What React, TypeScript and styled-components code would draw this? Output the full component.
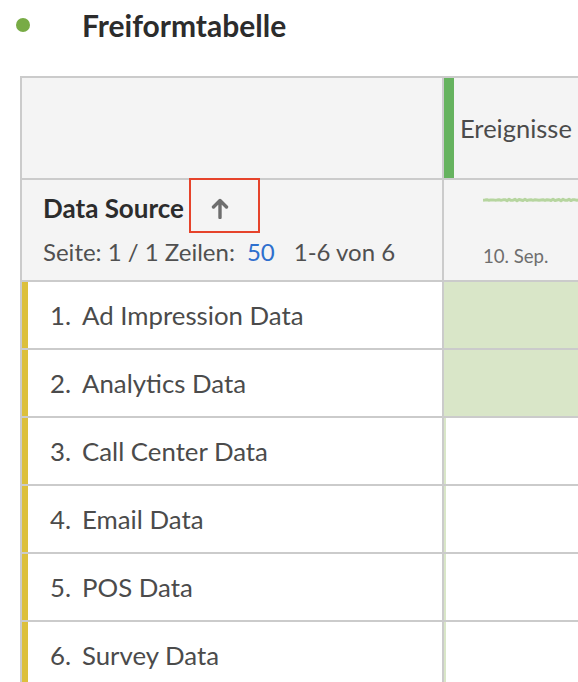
import React from "react";
import styled, { createGlobalStyle } from "styled-components";

const GlobalStyle = createGlobalStyle`
  html, body { margin: 0; padding: 0; background: #ffffff; overflow: hidden; }
  body { font-family: Lato, "Open Sans", sans-serif; }
`;

const Page = styled.div`
  width: 578px;
  height: 682px;
  overflow: hidden;
  background: #ffffff;
`;

const TitleBar = styled.header`
  display: flex;
  align-items: center;
  height: 50px;
`;

const Dot = styled.span`
  width: 14px;
  height: 14px;
  border-radius: 50%;
  background: #78ab45;
  margin-left: 16px;
  flex: none;
`;

const Title = styled.h1`
  margin: 0 0 0 52px;
  font-size: 30px;
  line-height: 34px;
  font-weight: 700;
  color: #2c2c2c;
`;

const TableWrap = styled.div`
  margin: 26px 0 0 20px;
  width: 700px;
  border-top: 2px solid #cbcbcb;
  border-left: 2px solid #cbcbcb;
`;

const Row = styled.div<{ $height: number; $head?: boolean }>`
  display: grid;
  grid-template-columns: 422px 1fr;
  height: ${(p) => p.$height}px;
  background: ${(p) => (p.$head ? "#f4f4f4" : "#ffffff")};
`;

const Cell = styled.div<{ $left?: boolean }>`
  box-sizing: border-box;
  border-bottom: 2px solid #cbcbcb;
  border-right: ${(p) => (p.$left ? "2px solid #cbcbcb" : "none")};
  position: relative;
  display: flex;
`;

const MetricHead = styled(Cell)`
  align-items: stretch;
`;

const GreenBar = styled.span`
  width: 10px;
  background: #66b35f;
  flex: none;
`;

const MetricLabel = styled.span`
  padding: 35px 0 0 6px;
  font-size: 25.5px;
  line-height: 30px;
  color: #4b4b4b;
  white-space: nowrap;
`;

const DimHead = styled(Cell)`
  flex-direction: column;
  padding: 13px 0 0 21px;
`;

const DimTitle = styled.div`
  display: flex;
  align-items: center;
  font-size: 26px;
  line-height: 30px;
  font-weight: 700;
  color: #2c2c2c;
`;

const SortIcon = styled.svg`
  width: 18px;
  height: 22px;
  margin-left: 27px;
`;

const Highlight = styled.span`
  position: absolute;
  left: 167px;
  top: -2px;
  width: 71px;
  height: 55px;
  box-sizing: border-box;
  border: 2px solid #e6432b;
  pointer-events: none;
`;

const Pager = styled.div`
  margin-top: 15px;
  font-size: 24px;
  line-height: 28px;
  color: #505050;
  white-space: nowrap;
  display: flex;
`;

const PagerLink = styled.span`
  color: #2d6fce;
  margin: 0 19px 0 12px;
`;

const TrendHead = styled(Cell)`
  flex-direction: column;
  padding: 16px 0 0 39px;
`;

const Spark = styled.svg`
  width: 220px;
  height: 8px;
  display: block;
`;

const DateLabel = styled.span`
  margin-top: 41px;
  font-size: 18.6px;
  line-height: 22px;
  color: #6e6e6e;
`;

const DimCell = styled(Cell)`
  align-items: center;
`;

const ColorTag = styled.span`
  width: 6px;
  align-self: stretch;
  background: #dcc03c;
  flex: none;
`;

const RowNum = styled.span`
  width: 43px;
  text-align: right;
  font-size: 25.8px;
  color: #4b4b4b;
  flex: none;
`;

const RowName = styled.span`
  margin-left: 11px;
  font-size: 25.8px;
  color: #4b4b4b;
  white-space: nowrap;
`;

const ValueCell = styled(Cell)`
  align-items: stretch;
`;

const ValueBar = styled.span`
  background: #d9e6c8;
`;

const rows = [
  { name: "Ad Impression Data", share: 100 },
  { name: "Analytics Data", share: 100 },
  { name: "Call Center Data", share: 0.8 },
  { name: "Email Data", share: 0.8 },
  { name: "POS Data", share: 0.8 },
  { name: "Survey Data", share: 0.8 },
];

const sparkPoints = Array.from({ length: 111 }, (_, i) => {
  const y = 4 + Math.sin(i * 2.3) * 0.5 + Math.cos(i * 3.7) * 0.35;
  return `${i * 2},${y.toFixed(2)}`;
}).join(" ");

export default function App() {
  return (
    <Page>
      <GlobalStyle />
      <TitleBar>
        <Dot />
        <Title>Freiformtabelle</Title>
      </TitleBar>
      <TableWrap>
        <Row $height={102} $head>
          <Cell $left />
          <MetricHead>
            <GreenBar />
            <MetricLabel>Ereignisse</MetricLabel>
          </MetricHead>
        </Row>
        <Row $height={102} $head>
          <DimHead $left>
            <DimTitle>
              Data Source
              <SortIcon viewBox="0 0 18 22">
                <path
                  d="M9 20.5V3.5M2.5 10L9 3.5L15.5 10"
                  fill="none"
                  stroke="#6e6e6e"
                  strokeWidth="3.4"
                  strokeLinecap="round"
                  strokeLinejoin="round"
                />
              </SortIcon>
            </DimTitle>
            <Pager>
              Seite: 1 / 1 Zeilen:<PagerLink>50</PagerLink>1-6 von 6
            </Pager>
            <Highlight />
          </DimHead>
          <TrendHead>
            <Spark viewBox="0 0 220 8">
              <polyline
                points={sparkPoints}
                fill="none"
                stroke="#b6d59f"
                strokeWidth="3"
                strokeLinejoin="round"
              />
            </Spark>
            <DateLabel>10. Sep.</DateLabel>
          </TrendHead>
        </Row>
        {rows.map((r, i) => (
          <Row key={r.name} $height={68}>
            <DimCell $left>
              <ColorTag />
              <RowNum>{i + 1}.</RowNum>
              <RowName>{r.name}</RowName>
            </DimCell>
            <ValueCell>
              <ValueBar style={{ width: r.share >= 100 ? "100%" : "2px" }} />
            </ValueCell>
          </Row>
        ))}
      </TableWrap>
    </Page>
  );
}
